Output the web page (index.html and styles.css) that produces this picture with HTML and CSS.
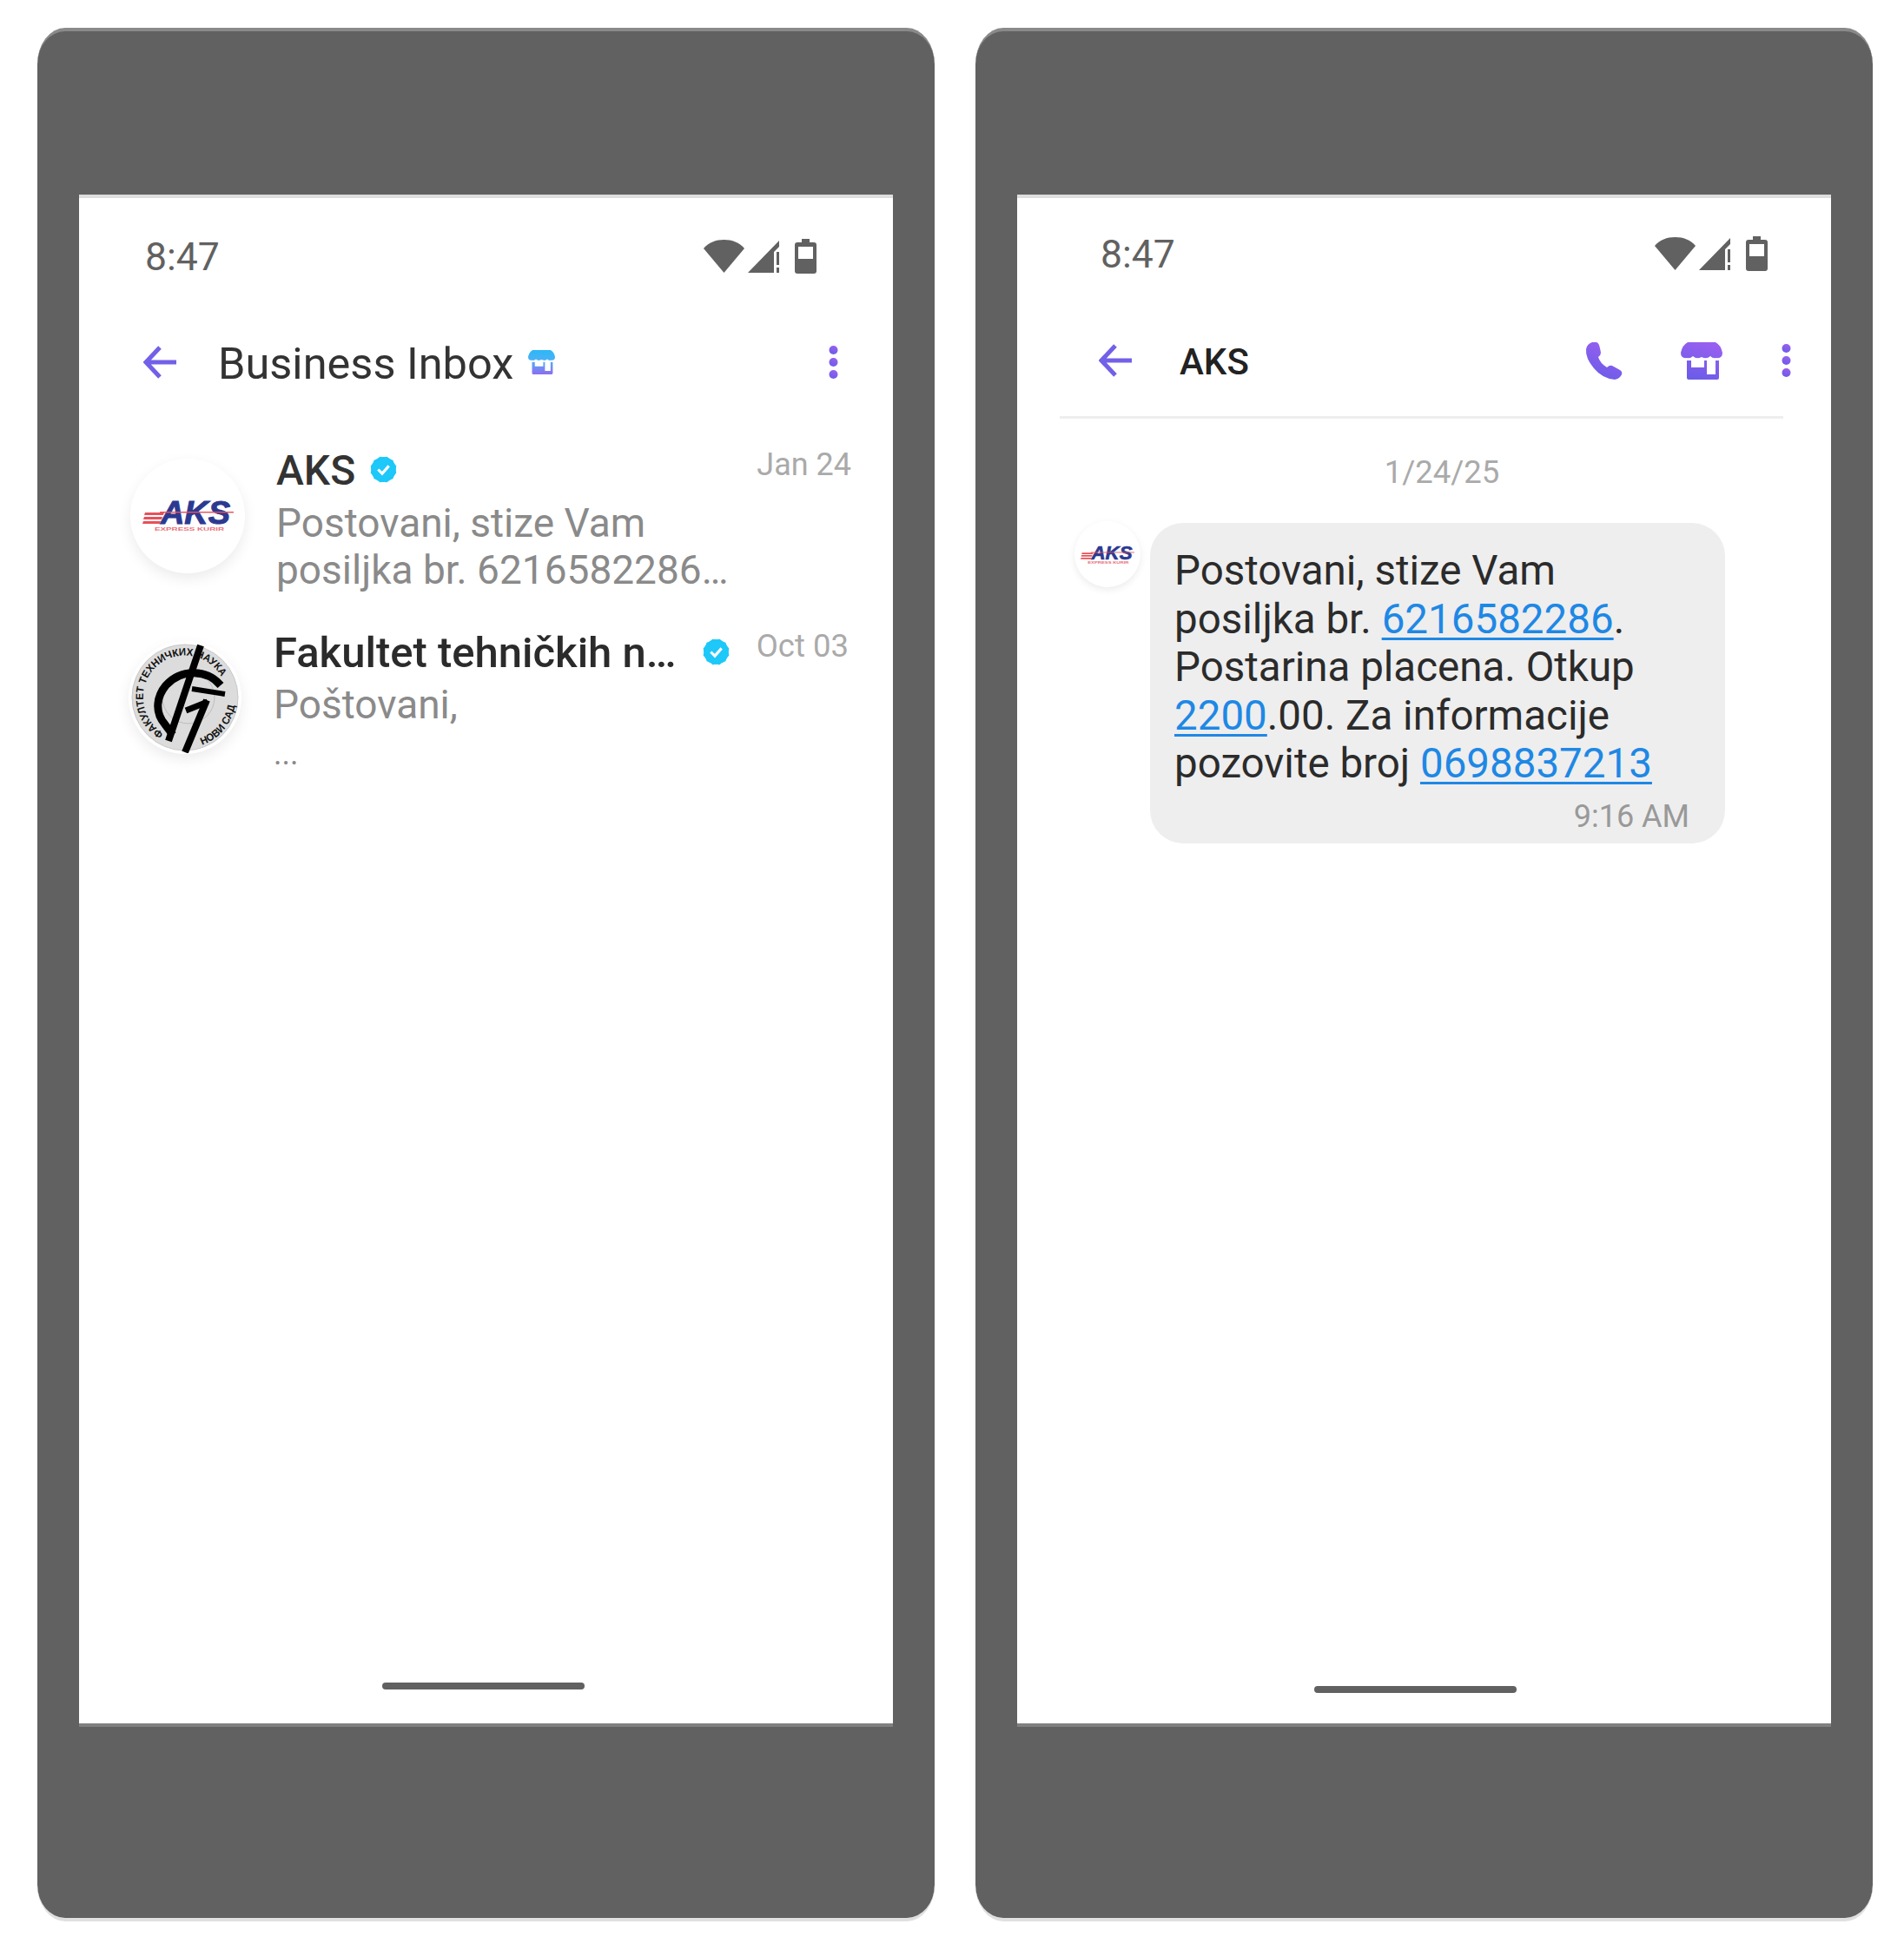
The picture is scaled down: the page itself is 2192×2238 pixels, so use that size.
FILE: index.html
```html
<!DOCTYPE html>
<html lang="sr">

<head>
    <meta charset="UTF-8">
    <title>Business Inbox</title>
    <link rel="stylesheet" href="styles.css">
</head>

<body>
    <!-- shared gradients and icons -->
    <svg class="defs" width="0" height="0">
        <defs>
            <linearGradient id="violet" x1="0.7" y1="0" x2="0.3" y2="1">
                <stop offset="0" stop-color="#9a5ff0" />
                <stop offset="1" stop-color="#6a5ce8" />
            </linearGradient>
            <linearGradient id="bluestore" x1="0" y1="0" x2="0" y2="1">
                <stop offset="0" stop-color="#2bb8f6" />
                <stop offset="0.45" stop-color="#4fb0f6" />
                <stop offset="1" stop-color="#8f6cf0" />
            </linearGradient>
            <symbol id="wifi" viewBox="0 0 47 38">
                <path d="M23.5 38 L0 10 C6 3 14 0 23.5 0 C33 0 41 3 47 10 Z" fill="#616161" />
            </symbol>
            <symbol id="signal" viewBox="0 0 38 38">
                <polygon points="0,38 36,1 36,8 30,14 30,38" fill="#616161" />
                <rect x="33" y="14" width="3" height="15" fill="#616161" />
                <rect x="33" y="32" width="3" height="6" fill="#616161" />
            </symbol>
            <symbol id="battery" viewBox="0 0 25 40">
                <path d="M8 0 H17 V4 H22 Q25 4 25 7 V37 Q25 40 22 40 H3 Q0 40 0 37 V7 Q0 4 3 4 H8 Z" fill="#616161" />
                <rect x="4" y="9" width="17" height="14" fill="#fff" />
            </symbol>
            <symbol id="back" viewBox="0 0 38 38">
                <path d="M19 2 L3 19 L19 36 M3 19 H38" fill="none" stroke="#7260e8" stroke-width="5" />
            </symbol>
            <symbol id="dots" viewBox="0 0 11 38">
                <circle cx="5.5" cy="5" r="5" />
                <circle cx="5.5" cy="19" r="5" />
                <circle cx="5.5" cy="33" r="5" />
            </symbol>
            <symbol id="store" viewBox="0 0 48 43">
                <path fill-rule="evenodd"
                    d="M8 0 H40 Q46 3 48 12 Q48 19 41 18 Q37 19 34 16 Q30 20 24 17 Q18 20 14 16 Q11 19 7 18 Q0 19 0 12 Q2 3 8 0 Z M7 21 H12 V29 H27 V21 H30 V37 H40 V21 H44 V41 Q44 43 42 43 H9 Q7 43 7 41 Z" />
            </symbol>
            <symbol id="badge" viewBox="0 0 32 32">
                <g fill="#1ec8f8">
                    <circle cx="16" cy="16" r="14" />
                    <rect x="5" y="5" width="22" height="22" rx="2" />
                    <rect x="5" y="5" width="22" height="22" rx="2" transform="rotate(30 16 16)" />
                    <rect x="5" y="5" width="22" height="22" rx="2" transform="rotate(60 16 16)" />
                </g>
                <path d="M10 16 L14.5 20.5 L22 12" fill="none" stroke="#fff" stroke-width="3" />
            </symbol>
            <symbol id="aks" viewBox="0 0 105 38">
                <text class="aks-word" x="21" y="28" textLength="80" lengthAdjust="spacingAndGlyphs">AKS</text>
                <g fill="#e8505a">
                    <polygon points="3,15 25,15 24,18 2,18" />
                    <polygon points="2,20 23,20 22,23 1,23" />
                    <polygon points="1,25 21,25 20,28 0,28" />
                    <rect x="20" y="14" width="85" height="1.4" />
                </g>
                <text class="aks-sub" x="14" y="36" textLength="80" lengthAdjust="spacingAndGlyphs">EXPRESS KURIR</text>
            </symbol>
        </defs>
    </svg>

    <div class="phone inbox">
        <div class="screen">
            <div class="status">
                <span class="clock">8:47</span>
                <div class="status-icons">
                    <svg class="ic-wifi"><use href="#wifi" /></svg>
                    <svg class="ic-signal"><use href="#signal" /></svg>
                    <svg class="ic-battery"><use href="#battery" /></svg>
                </div>
            </div>

            <div class="appbar">
                <svg class="ic-back"><use href="#back" /></svg>
                <h1 class="title">Business Inbox</h1>
                <svg class="ic-store-small"><use href="#store" /></svg>
                <svg class="ic-dots"><use href="#dots" /></svg>
            </div>

            <div class="list">
                <div class="row row-aks">
                    <div class="avatar">
                        <svg class="logo-aks"><use href="#aks" /></svg>
                    </div>
                    <div class="row-body">
                        <div class="row-head">
                            <span class="name">AKS</span>
                            <svg class="ic-badge"><use href="#badge" /></svg>
                            <span class="date">Jan 24</span>
                        </div>
                        <p class="preview">Postovani, stize Vam<br>posiljka br. 6216582286…</p>
                    </div>
                </div>

                <div class="row row-ftn">
                    <div class="avatar avatar-ftn">
                        <svg class="logo-ftn" viewBox="0 0 128 128">
                            <defs>
                                <path id="ring-top" d="M39.5 105 A48 48 0 1 1 108 45" />
                                <path id="ring-bottom" d="M83.7 118.7 A58 58 0 0 0 122 69" />
                            </defs>
                            <circle cx="64" cy="64" r="61" fill="#dcdcdc" stroke="#c8c8c8" />
                            <circle cx="68" cy="64" r="30" fill="none" stroke="#bdbdbd" />
                            <text class="ring-text"><textPath href="#ring-top" textLength="176"
                                    lengthAdjust="spacingAndGlyphs">ФАКУЛТЕТ ТЕХНИЧКИХ НАУКА</textPath></text>
                            <text class="ring-text"><textPath href="#ring-bottom" textLength="62"
                                    lengthAdjust="spacingAndGlyphs">НОВИ САД</textPath></text>
                            <path d="M105 50 C90 32 60 30 42 50 C32 62 28 80 41 95 L50 107" fill="none" stroke="#000"
                                stroke-width="9" />
                            <path d="M82 4 L45 114" stroke="#000" stroke-width="8" />
                            <path d="M89 67 L64 127" stroke="#000" stroke-width="8" />
                            <path d="M65 79 L90 69" stroke="#000" stroke-width="7" />
                            <path d="M72 54 L110 60" stroke="#000" stroke-width="6" />
                        </svg>
                    </div>
                    <div class="row-body">
                        <div class="row-head">
                            <span class="name strong">Fakultet tehničkih n…</span>
                            <svg class="ic-badge"><use href="#badge" /></svg>
                            <span class="date">Oct 03</span>
                        </div>
                        <p class="preview">Poštovani,</p>
                        <p class="preview more">...</p>
                    </div>
                </div>
            </div>

            <div class="home-bar"></div>
        </div>
    </div>

    <div class="phone chat">
        <div class="screen">
            <div class="status">
                <span class="clock">8:47</span>
                <div class="status-icons">
                    <svg class="ic-wifi"><use href="#wifi" /></svg>
                    <svg class="ic-signal"><use href="#signal" /></svg>
                    <svg class="ic-battery"><use href="#battery" /></svg>
                </div>
            </div>

            <div class="appbar">
                <svg class="ic-back"><use href="#back" /></svg>
                <h1 class="title">AKS</h1>
                <svg class="ic-phone" viewBox="0 0 43 43">
                    <path fill="url(#violet)"
                        d="M8 0 L13 0 Q16 1 17 7 L18 12 Q18 15 15 17 Q17 24 25 29 Q28 26 31 27 L40 32 Q43 34 42 37 Q40 42 34 43 Q20 42 10 30 Q0 18 1 8 Q2 2 8 0 Z" />
                </svg>
                <svg class="ic-store"><use href="#store" /></svg>
                <svg class="ic-dots"><use href="#dots" /></svg>
            </div>

            <div class="divider"></div>
            <div class="day">1/24/25</div>

            <div class="message">
                <div class="avatar avatar-small">
                    <svg class="logo-small"><use href="#aks" /></svg>
                </div>
                <div class="bubble">
                    <p class="bubble-text">Postovani, stize Vam<br>
                        posiljka br. <a href="#">6216582286</a>.<br>
                        Postarina placena. Otkup<br>
                        <a href="#">2200</a>.00. Za informacije<br>
                        pozovite broj <a href="#">0698837213</a></p>
                    <div class="sent">9:16 AM</div>
                </div>
            </div>

            <div class="home-bar"></div>
        </div>
    </div>
</body>

</html>
```

FILE: styles.css
```css
* {
    box-sizing: border-box;
}

body {
    margin: 0;
    padding: 32px 0 0 43px;
    display: flex;
    gap: 47px;
    background: #fff;
    font-family: Roboto, sans-serif;
}

.defs {
    position: absolute;
}

.phone {
    width: 1033px;
    height: 2180px;
    padding: 188px 48px 0;
    background: #616161;
    border-top: 4px solid #8a8a8a;
    border-bottom: 4px solid #e0e0e0;
    border-radius: 32px / 42px;
}

.screen {
    display: flex;
    flex-direction: column;
    width: 937px;
    height: 1764px;
    background: #fff;
    border-top: 4px solid #dedede;
    border-bottom: 4px solid #808080;
}

/* status bar */
.status {
    display: flex;
    justify-content: space-between;
    align-items: center;
    height: 38px;
    margin-top: 48px;
    padding: 0 88px 0 76px;
}

.chat .status {
    margin-top: 45px;
    padding: 0 73px 0 96px;
}

.clock {
    margin-top: 2px;
    font-size: 44.5px;
    line-height: 38px;
    color: #616161;
}

.status-icons {
    display: flex;
    align-items: center;
}

.ic-wifi {
    width: 47px;
    height: 38px;
}

.ic-signal {
    width: 38px;
    height: 38px;
    margin-left: 4px;
}

.ic-battery {
    width: 25px;
    height: 40px;
    margin-left: 16px;
}

/* app bar */
.appbar {
    display: flex;
    align-items: center;
    height: 40px;
    margin-top: 83px;
    padding: 0 63px 0 74px;
}

.chat .appbar {
    height: 44px;
    margin-top: 82px;
    padding: 0 46px 0 94px;
}

.ic-back {
    width: 38px;
    height: 38px;
    flex: none;
}

.title {
    margin: 3px 0 0 48px;
    font-size: 50.5px;
    font-weight: 400;
    line-height: 40px;
    color: #333;
}

.chat .title {
    margin-left: 55px;
    font-size: 42px;
    font-weight: 500;
    color: #222;
}

.ic-store-small {
    width: 31px;
    height: 30px;
    margin-left: 17px;
    fill: url(#bluestore);
}

.ic-dots {
    width: 11px;
    height: 38px;
    margin-left: auto;
    fill: url(#violet);
}

.ic-phone {
    width: 43px;
    height: 43px;
    margin-left: auto;
}

.ic-store {
    width: 48px;
    height: 43px;
    margin-left: 67px;
    fill: url(#violet);
}

.chat .ic-dots {
    margin-left: 68px;
}

/* inbox list */
.list {
    margin-top: 77px;
    padding-right: 48px;
}

.row {
    display: flex;
    align-items: flex-start;
}

.row-aks {
    padding-left: 59px;
}

.row-ftn {
    margin-top: 41px;
    padding-left: 57px;
}

.avatar {
    display: flex;
    align-items: center;
    justify-content: center;
    flex: none;
    width: 132px;
    height: 132px;
    margin-top: 14px;
    background: #fff;
    border-radius: 50%;
    box-shadow: 0 6px 16px rgba(0, 0, 0, 0.08);
}

.avatar-ftn {
    width: 130px;
    height: 130px;
    margin-top: 14px;
}

.logo-aks {
    width: 105px;
    height: 38px;
}

.logo-ftn {
    width: 128px;
    height: 128px;
}

.aks-word {
    font-family: "Liberation Sans", sans-serif;
    font-size: 37px;
    font-weight: 700;
    font-style: italic;
    fill: #2b3990;
    stroke: #2b3990;
    stroke-width: 1;
}

.aks-sub {
    font-family: "Liberation Sans", sans-serif;
    font-size: 6px;
    font-weight: 700;
    fill: #e8707a;
}

.ring-text {
    font-family: "Liberation Sans", sans-serif;
    font-size: 12px;
    font-weight: 700;
    fill: #111;
}

.row-body {
    flex: 1;
    margin-left: 36px;
}

.row-ftn .row-body {
    margin-left: 37px;
}

.row-head {
    display: flex;
    align-items: flex-start;
}

.name {
    font-size: 48px;
    font-weight: 500;
    line-height: 56px;
    color: #333;
}

.name.strong {
    font-size: 49px;
    color: #2b2b2b;
}

.ic-badge {
    width: 33px;
    height: 33px;
    margin: 10px 0 0 16px;
    flex: none;
}

.row-ftn .ic-badge {
    margin-left: 29px;
}

.date {
    margin-top: 1px;
    margin-left: auto;
    font-size: 36px;
    line-height: 40px;
    color: #aaa;
}

.row-ftn .date {
    margin-top: 0;
    margin-right: 3px;
    font-size: 36.5px;
}

.preview {
    margin: 5px 0 0;
    font-size: 46px;
    line-height: 54px;
    color: #8a8a8a;
}

.row-ftn .preview {
    margin-top: 4px;
}

.row-ftn .preview.more {
    margin-top: 3px;
    font-size: 36px;
}

/* chat */
.divider {
    height: 3px;
    margin: 42px 55px 0 49px;
    background: #eee;
}

.day {
    margin-top: 42px;
    padding-left: 41px;
    font-size: 36.5px;
    line-height: 40px;
    text-align: center;
    color: #aaa;
}

.message {
    display: flex;
    align-items: flex-start;
    margin: 36px 0 0 66px;
}

.avatar-small {
    width: 76px;
    height: 76px;
    margin-top: 0;
    box-shadow: 0 3px 8px rgba(0, 0, 0, 0.08);
}

.logo-small {
    width: 62px;
    height: 23px;
}

.bubble {
    width: 662px;
    margin: 2px 0 0 11px;
    padding: 28px 41px 11px 28px;
    background: #eee;
    border-radius: 38px;
}

.bubble-text {
    margin: 0;
    font-size: 47.5px;
    line-height: 55.5px;
    color: #2b2b2b;
}

.bubble-text a {
    color: #1e88e5;
    text-decoration-thickness: 3px;
    text-underline-offset: 5px;
}

.sent {
    margin-top: 12px;
    font-size: 36px;
    line-height: 40px;
    text-align: right;
    color: #999;
}

/* home indicator */
.home-bar {
    width: 233px;
    height: 8px;
    margin: auto 0 39px 349px;
    background: #616161;
    border-radius: 4px;
}

.chat .home-bar {
    margin: auto 0 35px 342px;
}
```
